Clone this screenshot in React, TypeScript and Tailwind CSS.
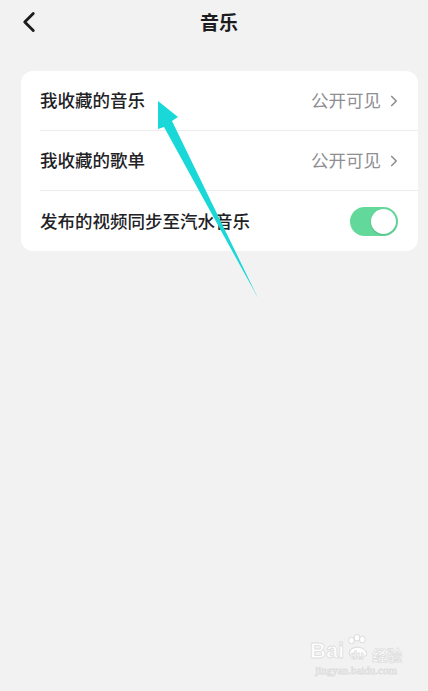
import { ChevronLeft, ChevronRight } from 'lucide-react';

const rows = [
  { label: '我收藏的音乐', value: '公开可见' },
  { label: '我收藏的歌单', value: '公开可见' },
];

export default function App() {
  return (
    <div className="relative min-h-[691px] w-[428px] bg-[#f2f2f2] overflow-hidden font-['Noto_Sans_CJK_SC','Noto_Sans',sans-serif]">
      {/* header */}
      <div className="relative h-[44px] flex items-center justify-center">
        <ChevronLeft size={34} strokeWidth={2} className="absolute left-[12px] top-[5px] text-[#1c1c1e]" />
        <span className="ml-[10px] text-[19px] font-semibold text-[#1c1c1e]">音乐</span>
      </div>

      {/* settings card */}
      <div className="mt-[27px] ml-[21px] mr-[10px] rounded-[12px] bg-white">
        {rows.map((r) => (
          <div key={r.label} className="ml-[19px] h-[60px] flex items-center border-b border-[#ececec] pr-[15px]">
            <span className="flex-1 text-[17.5px] font-medium text-[#222226]">{r.label}</span>
            <span className="text-[17.5px] text-[#8e8e93]">{r.value}</span>
            <ChevronRight size={18} strokeWidth={2.2} className="ml-[4px] text-[#8e8e93]" />
          </div>
        ))}
        <div className="ml-[19px] h-[60px] flex items-center pr-[20px]">
          <span className="flex-1 text-[17.5px] font-medium text-[#222226]">发布的视频同步至汽水音乐</span>
          <div className="w-[48px] h-[29px] rounded-full bg-[#62d99b] flex items-center justify-end pr-[2px]">
            <div className="w-[25px] h-[25px] rounded-full bg-white shadow-[0_1px_2px_rgba(0,0,0,0.15)]" />
          </div>
        </div>
      </div>

      {/* annotation arrow */}
      <svg className="absolute left-0 top-0 pointer-events-none" width="428" height="691">
        <polygon points="158,101 178,117 172,121 258,298 164,127 158,129" fill="#1ad8d8" />
      </svg>

      {/* watermark */}
      <div className="absolute left-[310px] top-[638px] flex flex-col items-center text-white [-webkit-text-stroke:0.8px_#dedede]">
        <div className="flex items-end gap-[2px] leading-none">
          <span className="text-[22px] font-bold font-['Liberation_Sans',sans-serif]">Bai</span>
          <div className="relative w-[24px] h-[24px]">
            <svg className="absolute -top-[4px] left-0" width="24" height="24" viewBox="0 0 22 22">
              <g fill="#fff" stroke="#dedede" strokeWidth="1">
                <ellipse cx="5" cy="6" rx="2.5" ry="3" />
                <ellipse cx="10" cy="3.5" rx="2.5" ry="3" />
                <ellipse cx="15" cy="5" rx="2.5" ry="3" />
                <path d="M3 18 C3 10 17 10 19 18 C19 22 3 22 3 18 Z" />
              </g>
            </svg>
            <span className="absolute left-[4px] bottom-[1px] text-[11px] font-bold font-['Liberation_Sans',sans-serif]">du</span>
          </div>
          <span className="text-[15px] font-bold">经验</span>
        </div>
        <span className="mt-[3px] text-[11px] font-['Liberation_Serif',serif] leading-none">jingyan.baidu.com</span>
      </div>
    </div>
  );
}
